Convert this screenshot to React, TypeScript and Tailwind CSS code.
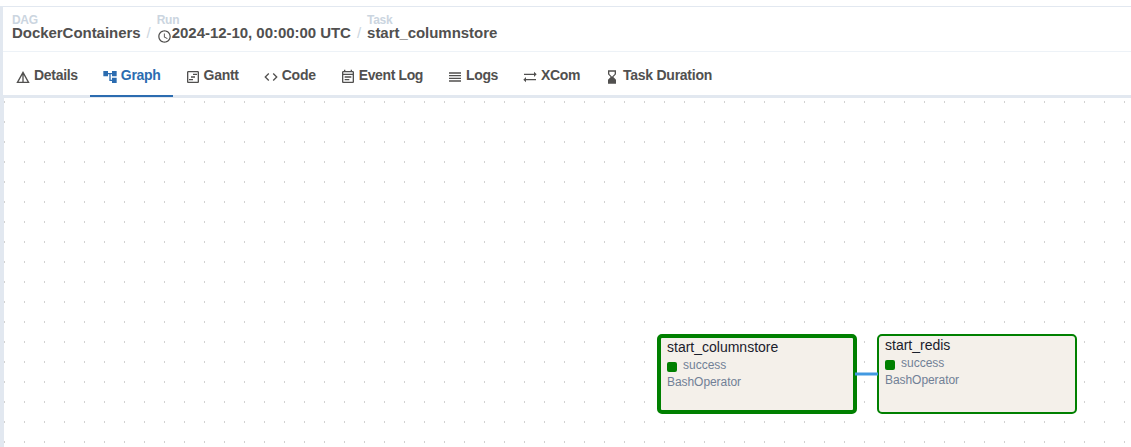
import type { ReactNode } from 'react';
import type { IconType } from 'react-icons';
import {
  MdAccountTree,
  MdCode,
  MdDetails,
  MdHourglassBottom,
  MdOutlineEventNote,
  MdOutlineSchedule,
  MdOutlineViewTimeline,
  MdReorder,
  MdSyncAlt,
} from 'react-icons/md';

const tabs: { label: string; icon: IconType; tracking: string; active?: boolean }[] = [
  { label: 'Details', icon: MdDetails, tracking: 'tracking-[-0.3px]' },
  { label: 'Graph', icon: MdAccountTree, tracking: 'tracking-[-0.29px]', active: true },
  { label: 'Gantt', icon: MdOutlineViewTimeline, tracking: 'tracking-[-0.28px]' },
  { label: 'Code', icon: MdCode, tracking: 'tracking-[-0.25px]' },
  { label: 'Event Log', icon: MdOutlineEventNote, tracking: 'tracking-[-0.38px]' },
  { label: 'Logs', icon: MdReorder, tracking: 'tracking-[-0.36px]' },
  { label: 'XCom', icon: MdSyncAlt, tracking: 'tracking-[-0.36px]' },
  { label: 'Task Duration', icon: MdHourglassBottom, tracking: 'tracking-[-0.26px]' },
];

function Crumb({ label, children }: { label: string; children: ReactNode }) {
  return (
    <div className="flex flex-col">
      <span className="h-[11px] text-[12px] leading-3 tracking-[-0.3px] text-[#cbd5e0]">{label}</span>
      <span className="flex h-[15px] items-center text-[15px] leading-[15px] tracking-[-0.04px]">{children}</span>
    </div>
  );
}

function Separator() {
  return <span className="mx-1.5 mt-[11px] text-[15px] font-normal leading-[15px] text-[#cbd5e0]">/</span>;
}

function TaskNode({ name, selected }: { name: string; selected?: boolean }) {
  return (
    <div
      className={`h-20 w-[200px] rounded-[5px] border-[#008000] bg-[#f4f0ea] px-1.5 ${
        selected ? 'border-4' : 'border-2'
      }`}
    >
      <div className="h-[18px] text-[14px] leading-[18px] text-[#1a202c]">{name}</div>
      <div className="flex h-[18px] items-center text-[12px] leading-[18px] text-[#718096]">
        <span className="mr-1.5 mt-[3px] size-2.5 rounded-[2px] bg-[#008000]" />
        <span>success</span>
      </div>
      <div className="h-4 text-[12px] leading-4 tracking-[-0.06px] text-[#718096]">BashOperator</div>
    </div>
  );
}

export default function App() {
  return (
    <div className="h-[447px] w-full overflow-hidden bg-white pt-1.5 font-['Liberation_Sans',Arial,sans-serif] text-[#51504f]">
      <div className="flex h-[441px] flex-col border-l-[3px] border-t border-l-[#e2e8f0] border-t-[#e2e8f0]">
        <nav className="flex h-[45px] shrink-0 items-start border-b border-[#edf2f7] pl-[9px] pt-[7px] font-bold">
          <Crumb label="DAG">DockerContainers</Crumb>
          <Separator />
          <Crumb label="Run">
            <MdOutlineSchedule className="mt-[7px] size-[15px]" />
            2024-12-10, 00:00:00 UTC
          </Crumb>
          <Separator />
          <Crumb label="Task">start_columnstore</Crumb>
        </nav>
        <div className="flex h-[46px] shrink-0 items-stretch border-b-[3px] border-[#e2e8f0] pt-[3px]">
          {tabs.map(({ label, icon: Icon, tracking, active }) => (
            <button
              key={label}
              className={`-mb-[2px] flex items-center border-b-2 px-3 text-[14px] font-bold leading-[21px] ${
                active ? 'border-[#2b6cb0] text-[#2b6cb0]' : 'border-transparent'
              }`}
            >
              <Icon className="mt-[3px] size-4" />
              <span className={`ml-[3px] ${tracking}`}>{label}</span>
            </button>
          ))}
        </div>
        <main className="relative flex-1 border-l border-[#e2e8f0]">
          <svg className="absolute inset-0 size-full">
            <defs>
              <pattern id="grid-dots" width="20" height="20" patternUnits="userSpaceOnUse">
                <rect y="3" width="1" height="2" fill="#d2d2d2" />
              </pattern>
            </defs>
            <rect width="100%" height="100%" fill="url(#grid-dots)" />
          </svg>
          <div className="absolute left-[653px] top-[236px]">
            <TaskNode name="start_columnstore" selected />
          </div>
          <div className="absolute left-[873px] top-[236px]">
            <TaskNode name="start_redis" />
          </div>
          <svg className="absolute inset-0 size-full">
            <path d="M851 276H874" stroke="#4299e1" strokeWidth="3" />
          </svg>
        </main>
      </div>
    </div>
  );
}
